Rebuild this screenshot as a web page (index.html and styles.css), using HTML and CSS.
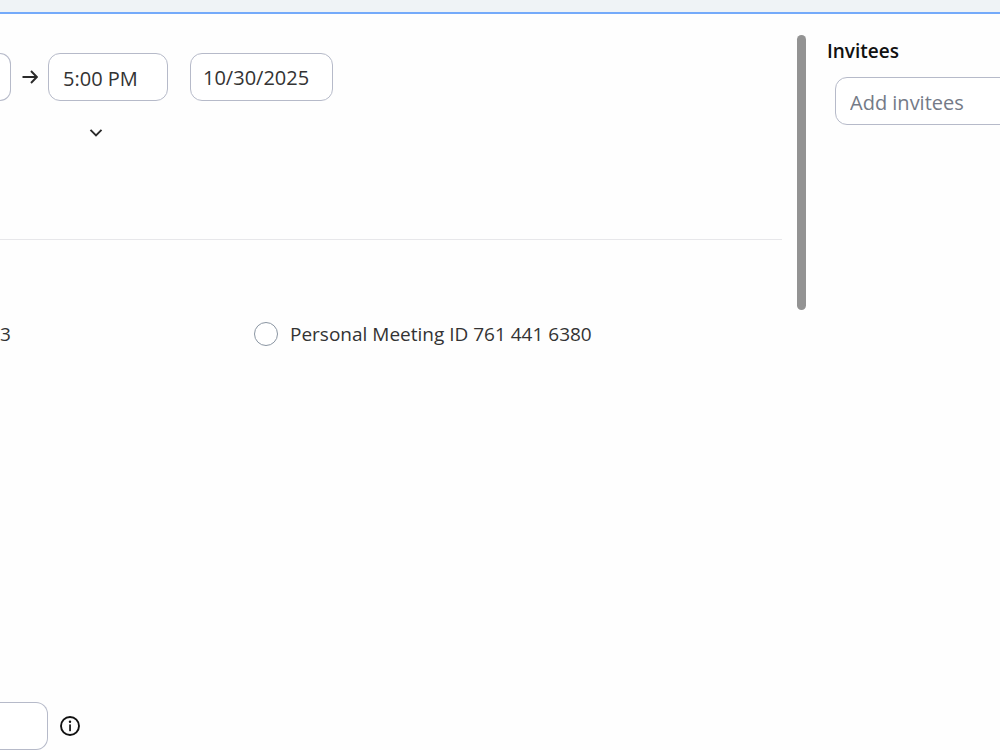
FILE: index.html
```html
<!DOCTYPE html>
<html lang="en">
<head>
  <meta charset="UTF-8">
  <meta name="viewport" content="width=device-width, initial-scale=1.0">
  <title>Schedule Meeting</title>
  <link rel="stylesheet" href="styles.css">
</head>
<body>
  <header class="topbar"></header>
  <main class="page">
    <form class="form">
      <div class="when">
        <input class="field cut" type="text" aria-label="Start time">
        <svg class="arrow" viewBox="0 0 16 16" width="16" height="16" aria-hidden="true">
          <path d="M0.5 8H14.5M9 2L14.8 8L9 14"/>
        </svg>
        <input class="field time" type="text" value="5:00 PM" aria-label="End time">
        <input class="field date" type="text" value="10/30/2025" aria-label="End date">
      </div>
      <button class="more" type="button" aria-label="More options">
        <svg viewBox="0 0 14 10" width="14" height="10"><path d="M1.5 1.8L7 7.5L12.5 1.8"/></svg>
      </button>
      <hr class="line">
      <div class="ids">
        <span class="auto">3</span>
        <input class="radio" type="radio" name="meeting-id" id="pmi">
        <label for="pmi">Personal Meeting ID 761 441 6380</label>
      </div>
      <div class="bottom">
        <input class="field cut wide" type="text" aria-label="Passcode">
        <button class="info" type="button" aria-label="Information">
          <svg viewBox="0 0 20 20" width="20" height="20">
            <circle class="ring" cx="10" cy="10" r="9"/>
            <circle cx="10" cy="5.8" r="1.2"/>
            <rect x="9.2" y="8.4" width="1.7" height="6.8"/>
          </svg>
        </button>
      </div>
    </form>
    <div class="thumb"></div>
    <aside class="side">
      <label class="title" for="invitees">Invitees</label>
      <input class="field invite" type="text" id="invitees" placeholder="Add invitees">
    </aside>
  </main>
</body>
</html>
```
FILE: styles.css
```css
* {box-sizing: border-box;}
html, body {height: 100%;}
html {overflow: hidden;}
body {margin: 0;display: flex;flex-direction: column;overflow: hidden;background: #fefefe;color: #333;font-family: "Open Sans","Noto Sans",sans-serif;font-size: 19px;}
button {padding: 0;border: 0;background: none;cursor: pointer;}
svg {display: block;fill: none;stroke: #2a2a2a;stroke-width: 1.9;}

.topbar {height: 14px;flex: none;background: #eff3f6;border-bottom: 2px solid #74aafa;}
.page {flex: 1;display: grid;grid-template-columns: 1fr 9px 194px;}

.form {display: flex;flex-direction: column;align-items: flex-start;padding-top: 39px;margin-right: 15px;}
.field {height: 48px;border: 1px solid #b6bac9;border-radius: 12px;background: #fff;color: #333;font-family: inherit;font-size: 20px;outline: 0;}
.field::placeholder {color: #747a87;opacity: 1;}
.cut {width: 11px;padding: 0;border-left: 0;border-radius: 0 12px 12px 0;}
.wide {width: 48px;}

.when {display: flex;align-items: center;}
.arrow {margin: 0 10px 0 11px;}
.time {width: 120px;padding: 2px 0 0 14px;}
.date {width: 143px;padding: 0 0 0 12px;margin-left: 22px;}
.more {margin: 27px 0 0 89px;}

.line {width: 100%;height: 1px;margin: 101px 0 0;border: 0;background: #e7e7ea;}

.ids {display: flex;align-items: center;margin-top: 80px;height: 28px;}
.auto {width: 254px;}
.radio {appearance: none;width: 24px;height: 24px;margin: 0 12px 0 0;border: 1px solid #8a95a2;border-radius: 50%;background: #fff;}
.radio:checked {border: 7px solid #0b5cff;}

.bottom {display: flex;align-items: center;margin-top: auto;}
.info {margin-left: 12px;}
.info svg {fill: #111;stroke: none;}
.info .ring {fill: none;stroke: #111;stroke-width: 1.9;}

.thumb {height: 275px;margin-top: 21px;border-radius: 5px;background: #939393;}

.side {display: flex;flex-direction: column;padding: 24px 0 0 21px;overflow: hidden;}
.title {color: #111;font-weight: 600;line-height: 26px;}
/* runs on past the window's right edge */
.invite {flex: none;width: 320px;margin: 13px 0 0 8px;padding: 2px 12px 0 14px;}
```
